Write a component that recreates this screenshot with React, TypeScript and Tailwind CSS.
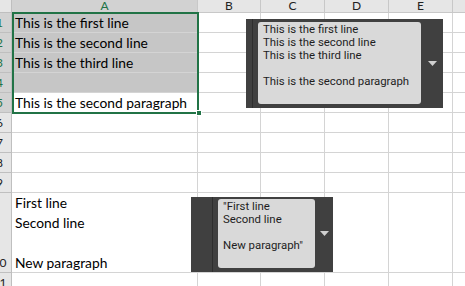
import React from "react";

const cols = [
  { label: "A", w: "w-[186px]", active: true },
  { label: "B", w: "w-[63px]" },
  { label: "C", w: "w-[64px]" },
  { label: "D", w: "w-[64px]" },
  { label: "E", w: "w-[64px]" },
  { label: "", w: "w-[40px]" },
];

const rows = [
  { n: "1", h: "h-[20px]", text: "This is the first line", sel: true, fill: true },
  { n: "2", h: "h-[20px]", text: "This is the second line", sel: true, fill: true },
  { n: "3", h: "h-[20px]", text: "This is the third line", sel: true, fill: true },
  { n: "4", h: "h-[20px]", text: "", sel: true, fill: true },
  { n: "5", h: "h-[20px]", text: "This is the second paragraph", sel: true },
  { n: "6", h: "h-[20px]", text: "" },
  { n: "7", h: "h-[20px]", text: "" },
  { n: "8", h: "h-[20px]", text: "" },
  { n: "9", h: "h-[20px]", text: "" },
  { n: "10", h: "h-[80px]", lines: ["First line", "Second line", "", "New paragraph"] },
  { n: "11", h: "h-[20px]", text: "" },
];

function Popup({
  lines,
  className,
  stripe,
  pad,
  arrow,
}: {
  lines: string[];
  className: string;
  stripe: string;
  pad: string;
  arrow: string;
}) {
  return (
    <div className={`absolute flex bg-[#404040] ${className}`}>
      <div className={`${stripe} border-r border-[#2e2e2e]`} />
      <div className={`flex-1 flex ${pad} pl-[5px]`}>
        <div className="flex-1 rounded-[3px] bg-[#d9d9d9] px-[5px] pt-[1px] text-[11.4px] leading-[13px] text-[#1e1e1e] font-['Roboto',sans-serif]">
          {lines.map((l, i) => (
            <div key={i} className="h-[13px] whitespace-nowrap">{l}</div>
          ))}
        </div>
        <div className={`${arrow} flex items-center justify-center`}>
          <svg width="9" height="5" viewBox="0 0 9 5">
            <path d="M0 0h9L4.5 5z" fill="#d0d0d0" />
          </svg>
        </div>
      </div>
    </div>
  );
}

export default function App() {
  return (
    <div className="relative w-[465px] h-[286px] overflow-hidden bg-white font-['Lato','Open_Sans',sans-serif] text-black">
      {/* header */}
      <div className="flex h-[13px] -ml-[12px]">
        <div className="w-[24px] shrink-0 bg-[#e6e6e6] border-r border-b border-[#bfbfbf]" />
        {cols.map((c) => (
          <div
            key={c.label}
            className={`${c.w} shrink-0 flex items-end justify-center text-[12px] leading-[12px] border-r border-b border-[#c8c8c8] ${
              c.active ? "bg-[#d2d2d2] text-[#217346]" : "bg-[#e6e6e6] text-[#222]"
            }`}
          >
            {c.label}
          </div>
        ))}
      </div>

      {rows.map((r) => (
        <div key={r.n} className={`flex ${r.h} -ml-[12px]`}>
          <div
            className={`w-[24px] shrink-0 flex items-end justify-center pb-[2px] text-[12px] leading-[14px] border-r border-b border-[#bfbfbf] ${
              r.sel ? "bg-[#d2d2d2] text-[#217346]" : "bg-[#e6e6e6] text-[#222]"
            }`}
          >
            {r.n}
          </div>
          <div
            className={`w-[186px] shrink-0 border-r border-b border-[#d4d4d4] pl-[3px] text-[13.8px] ${
              r.fill ? "bg-[#c6c6c6]" : ""
            }`}
          >
            {r.lines ? (
              r.lines.map((l, i) => (
                <div key={i} className="h-[20px] leading-[20px] whitespace-nowrap">{l}</div>
              ))
            ) : (
              <div className="h-[19px] leading-[20px] whitespace-nowrap">{r.text}</div>
            )}
          </div>
          {cols.slice(1).map((c) => (
            <div key={c.label} className={`${c.w} shrink-0 border-r border-b border-[#d4d4d4]`} />
          ))}
        </div>
      ))}

      {/* selection */}
      <div className="absolute left-[12px] top-[12px] w-[187px] h-[102px] border-2 border-[#217346] pointer-events-none" />
      <div className="absolute left-[196px] top-[110px] w-[6px] h-[6px] bg-[#217346] border border-white" />

      <Popup
        className="left-[246px] top-[19px] w-[197px] h-[89px]"
        stripe="w-[7px]"
        pad="pt-[3px] pb-[4px]"
        arrow="w-[22px]"
        lines={["This is the first line", "This is the second line", "This is the third line", "", "This is the second paragraph"]}
      />
      <Popup
        className="left-[191px] top-[197px] w-[142px] h-[75px]"
        stripe="w-[22px]"
        pad="pt-[2px] pb-[4px]"
        arrow="w-[18px]"
        lines={["\"First line", "Second line", "", "New paragraph\""]}
      />
    </div>
  );
}
